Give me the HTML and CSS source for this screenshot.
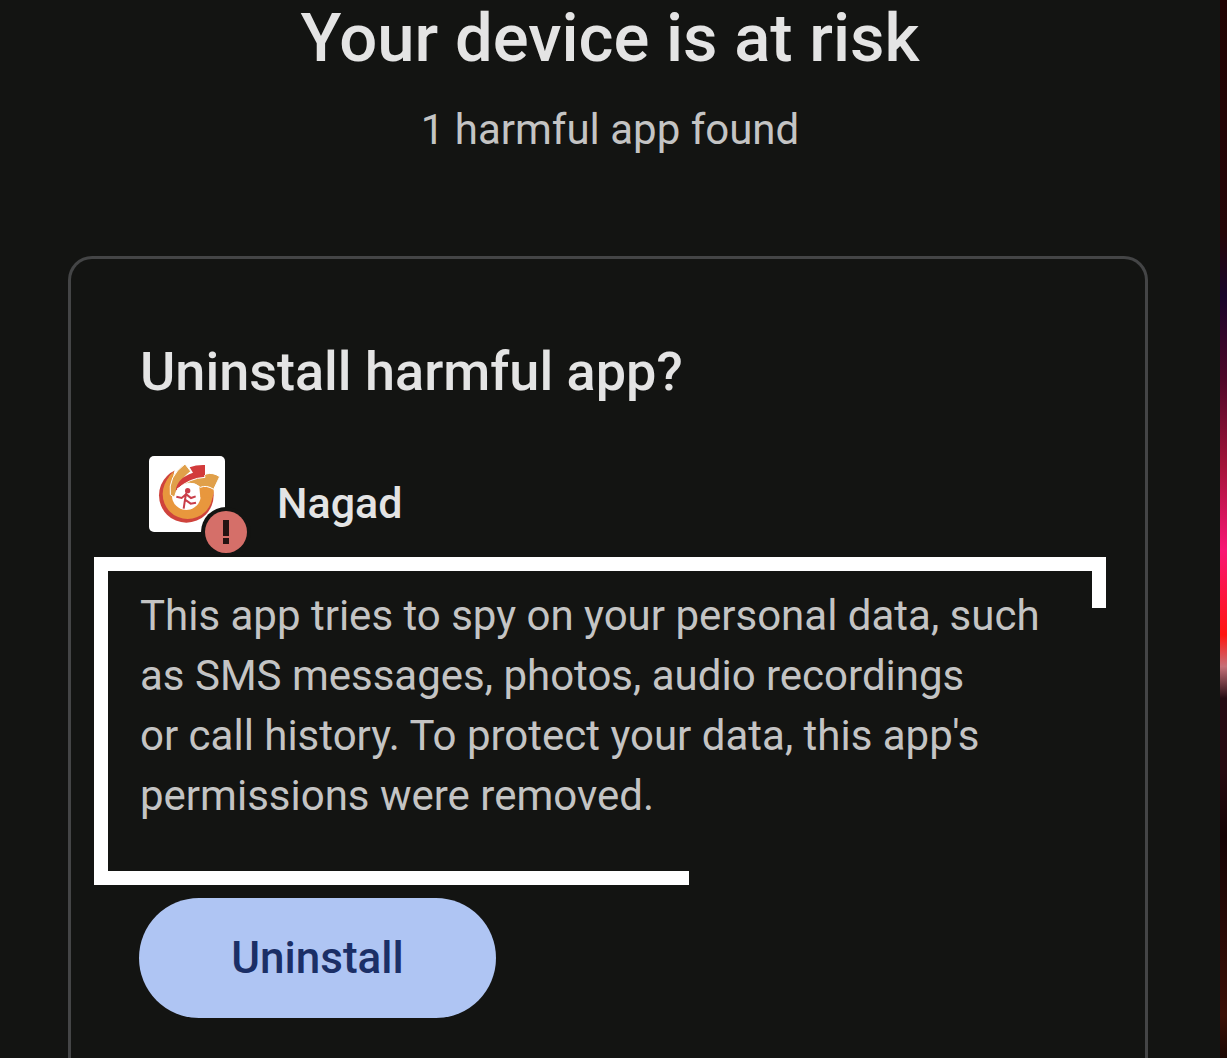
FILE: index.html
```html
<!DOCTYPE html>
<html lang="en">
<head>
<meta charset="utf-8">
<title>Your device is at risk</title>
<link rel="stylesheet" href="styles.css">
</head>
<body>
<main class="screen">
  <header class="header">
    <h1 class="title">Your device is at risk</h1>
    <p class="subtitle">1 harmful app found</p>
  </header>
  <section class="card">
    <h2 class="card-title">Uninstall harmful app?</h2>
    <div class="app">
      <div class="app-icon">
        <svg class="logo" viewBox="0 0 228 228" aria-hidden="true">
          <circle cx="112" cy="118" r="82" fill="#cf433c"/>
          <circle cx="116" cy="114" r="75" fill="#e8973d"/>
          <path d="M76 44L98 22L228 22V104L180 106L112 118L64 104Z" fill="#fff"/>
          <circle cx="112" cy="119" r="43" fill="#fff"/>
          <path d="M150 84L194 98Q196 112 190 126L154 124Z" fill="#e8973d"/>
          <path d="M76 44Q52 64 44 104L62 122Q60 82 76 44Z" fill="#e8973d"/>
          <path d="M108 24L125 46Q90 72 76 124L64 116Q56 62 108 24Z" fill="#e0a04a" stroke="#fff" stroke-width="3"/>
          <path d="M122 34Q142 26 168 27L168 72Q118 66 80 104Q84 66 132 50Z" fill="#d23b3b"/>
          <path d="M84 100Q122 66 168 64Q164 58 171 54Q192 48 212 62L194 100Q172 86 154 94Q122 66 84 100Z" fill="#e0a04a" stroke="#fff" stroke-width="3"/>
          <circle cx="116" cy="104" r="8" fill="#c93e49"/>
          <path d="M112 110L108 131L125 143L141 140M108 131L104 158M111 115L98 126L82 122M113 116L126 126L140 121" fill="none" stroke="#c93e49" stroke-width="6"/>
        </svg>
        <svg class="warning" viewBox="0 0 50 50" role="img" aria-label="Harmful">
          <circle cx="25" cy="25" r="25" fill="#131412"/>
          <circle cx="25" cy="25" r="21" fill="#d56f69"/>
          <path d="M22 13h6v16h-6zM22 31h6v6h-6z" fill="#241312"/>
        </svg>
      </div>
      <span class="app-name">Nagad</span>
    </div>
    <div class="notice">
      <p class="description">This app tries to spy on your personal data, such<br>as SMS messages, photos, audio recordings<br>or call history. To protect your data, this app's<br>permissions were removed.</p>
    </div>
    <button class="uninstall" type="button">Uninstall</button>
  </section>
</main>
<div class="edge"></div>
</body>
</html>
```
FILE: styles.css
```css
* { box-sizing: border-box; }
body {
  margin: 0;
  min-height: 100vh;
  display: flex;
  background: #131412;
  color: #e4e4e4;
  font-family: Roboto, sans-serif;
}
h1, h2, p { margin: 0; }
h1, h2 { font-weight: 500; }
.screen { flex: 1; display: flex; flex-direction: column; }
.edge {
  width: 7px;
  background: linear-gradient(#210302 0, #250507 22%, #19052a 28%, #500728 36%, #a31339 44%, #f91674 52%, #ff1510 60%, #c67078 63%, #260b13 66%, #260a10 73%, #150203 79%, #3b1007 96%, #1c0803);
}
.header { text-align: center; padding: 0 0 96px; }
.title { font-size: 67px; line-height: 76px; }
.subtitle { font-size: 42px; line-height: 60px; margin-top: 24px; color: #c4c4c4; }
.card {
  flex: 1;
  margin: 0 72px 0 68px;
  padding: 83px 39px 38px 23px;
  border: 3px solid #444546;
  border-bottom: 0;
  border-radius: 24px 24px 0 0;
}
.card-title { font-size: 54px; line-height: 60px; margin-left: 46px; }
.app { display: flex; margin: 54px 0 25px 55px; }
.app-icon { position: relative; width: 76px; height: 76px; border-radius: 5px; background: #fff; }
.logo { display: block; width: 76px; height: 76px; }
.warning { position: absolute; left: 52px; top: 51px; width: 50px; height: 50px; }
.app-name { margin: 18px 0 0 52px; font-size: 43px; line-height: 58px; font-weight: 500; }
.notice {
  padding: 29px 0 59px 46px;
  background:
    linear-gradient(#fff, #fff) left top / 100% 14px no-repeat,
    linear-gradient(#fff, #fff) left top / 14px 100% no-repeat,
    linear-gradient(#fff, #fff) right top / 14px 51px no-repeat,
    linear-gradient(#fff, #fff) left bottom / 595px 14px no-repeat;
}
.description { font-size: 42px; line-height: 60px; color: #c4c4c4; }
.uninstall {
  margin: 13px 0 0 45px;
  width: 357px;
  height: 120px;
  border: 0;
  border-radius: 60px;
  background: #afc5f3;
  color: #1b2f66;
  font: 500 44px Roboto, sans-serif;
}
```
